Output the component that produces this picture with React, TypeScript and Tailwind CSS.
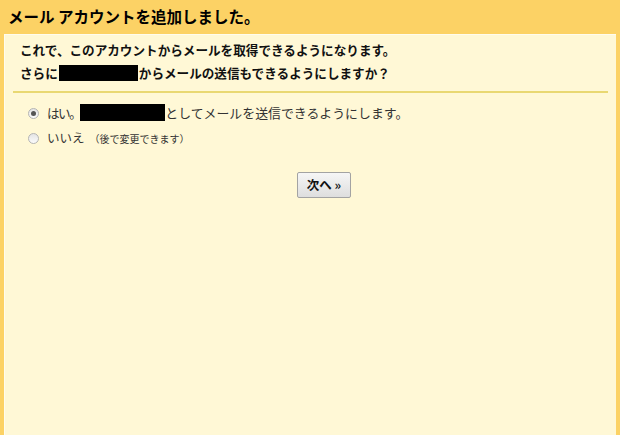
import React from 'react';

const font = { fontFamily: '"Noto Sans CJK JP", "Noto Sans", sans-serif' };

const Radio = ({ checked }: { checked?: boolean }) => (
  <span className="flex h-[11px] w-[11px] items-center justify-center rounded-full border border-[#b4b4b4] bg-gradient-to-b from-[#e4e4e4] to-[#fbfbfb]">
    {checked && <span className="h-[5px] w-[5px] rounded-full bg-[#555]" />}
  </span>
);

export default function App() {
  return (
    <div className="flex h-[435px] w-[620px] flex-col bg-[#fcd265] text-[#222]" style={font}>
      {/* Header */}
      <div className="flex h-[34px] items-center px-2">
        <h1 className="text-[15.5px] font-bold leading-none text-black">メール アカウントを追加しました。</h1>
      </div>

      {/* Body */}
      <div className="ml-[4px] mr-[4px] flex flex-1 flex-col border-l border-t border-[#fffcee] bg-[#fff8d6]">
        <div className="px-[15px] pt-[3px] text-[12.6px] font-bold leading-[23px] text-[#111]">
          <p>これで、このアカウントからメールを取得できるようになります。</p>
          <p className="flex items-center">
            さらに
            <span className="mx-[1px] inline-block h-[16px] w-[79px] bg-black" />
            からメールの送信もできるようにしますか？
          </p>
        </div>

        <div className="ml-[8px] mr-[8px] mt-[7px] h-[2px] bg-[#e9d872]" />

        <div className="mt-[9px] flex flex-col gap-[3px] pl-[23px] text-[#333]">
          <label className="flex h-[22px] items-center gap-[8px] text-[12.6px]">
            <Radio checked />
            <span className="flex items-center">
              <span className="tracking-[-1.5px]">はい。</span>
              <span className="inline-block h-[17px] w-[85px] bg-black" />
              <span className="text-[12.9px]">としてメールを送信できるようにします。</span>
            </span>
          </label>
          <label className="flex h-[22px] items-center gap-[8px]">
            <Radio />
            <span className="text-[12.5px]">いいえ</span>
            <span className="-ml-[3px] text-[10px]">（後で変更できます）</span>
          </label>
        </div>

        <div className="mt-[23px] flex justify-center pl-[27px]">
          <button className="flex h-[26px] w-[54px] items-center justify-center rounded-[2px] border border-[#a3a3a3] bg-gradient-to-b from-[#f6f6f6] to-[#dedede] text-[12.5px] font-bold text-[#111]">
            次へ »
          </button>
        </div>
      </div>
    </div>
  );
}
